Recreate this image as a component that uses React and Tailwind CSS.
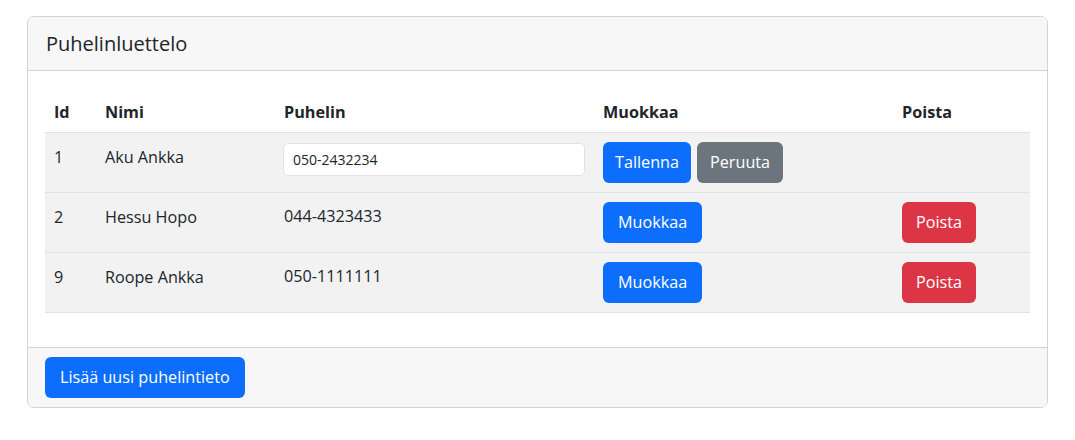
import React, { useState } from "react";

const rows = [
  { id: 1, name: "Aku Ankka", phone: "050-2432234", editing: true },
  { id: 2, name: "Hessu Hopo", phone: "044-4323433" },
  { id: 9, name: "Roope Ankka", phone: "050-1111111" },
];

const btn =
  "h-[41px] rounded-[6px] text-white text-[16.2px] leading-[26px] whitespace-nowrap cursor-pointer";

export default function App() {
  const [phone, setPhone] = useState("050-2432234");

  return (
    <div className="min-h-[440px] bg-white pt-4 px-[27px] font-['Open_Sans',sans-serif] text-[#212529]">
      <div className="w-[1021px] border border-[#d3d3d3] rounded-[7px] overflow-hidden">
        {/* Header */}
        <div className="h-[54px] bg-[#f7f7f7] border-b border-[#d3d3d3] px-[18px] flex items-center">
          <h5 className="text-[20px] font-normal">Puhelinluettelo</h5>
        </div>

        {/* Body */}
        <div className="px-[17px] pt-[17px] pb-[34px]">
          <table className="w-full table-fixed border-collapse text-[16.2px] leading-[26px]">
            <colgroup>
              <col className="w-[51px]" />
              <col className="w-[179px]" />
              <col className="w-[319px]" />
              <col className="w-[299px]" />
              <col />
            </colgroup>
            <thead>
              <tr className="h-[44px] border-b border-[#dee2e6] text-left align-top">
                <th className="px-[9px] pt-[11px] font-bold">Id</th>
                <th className="px-[9px] pt-[11px] font-bold">Nimi</th>
                <th className="px-[9px] pt-[11px] font-bold">Puhelin</th>
                <th className="px-[9px] pt-[11px] font-bold">Muokkaa</th>
                <th className="px-[9px] pt-[11px] font-bold">Poista</th>
              </tr>
            </thead>
            <tbody>
              {rows.map((r) => (
                <tr
                  key={r.id}
                  className="h-[60px] bg-[#f2f2f2] border-b border-[#dee2e6] align-top"
                >
                  <td className="px-[9px] pt-[11px]">{r.id}</td>
                  <td className="px-[9px] pt-[11px]">{r.name}</td>
                  <td className="px-[8px] pt-[10px]">
                    {r.editing ? (
                      <input
                        className="w-[302px] h-[33px] bg-white border border-[#dee2e6] rounded-[5px] px-[9px] text-[14px] outline-none"
                        value={phone}
                        onChange={(e) => setPhone(e.target.value)}
                      />
                    ) : (
                      <span className="pl-px">{r.phone}</span>
                    )}
                  </td>
                  <td className="px-[9px] pt-[9px]">
                    {r.editing ? (
                      <div className="flex gap-[6px]">
                        <button type="button" className={`${btn} px-[12px] bg-[#0d6efd]`}>
                          Tallenna
                        </button>
                        <button type="button" className={`${btn} px-[13px] bg-[#6c757d]`}>
                          Peruuta
                        </button>
                      </div>
                    ) : (
                      <button type="button" className={`${btn} px-[15px] bg-[#0d6efd]`}>
                        Muokkaa
                      </button>
                    )}
                  </td>
                  <td className="px-[9px] pt-[9px]">
                    {!r.editing && (
                      <button type="button" className={`${btn} px-[14px] bg-[#dc3545]`}>
                        Poista
                      </button>
                    )}
                  </td>
                </tr>
              ))}
            </tbody>
          </table>
        </div>

        {/* Footer */}
        <div className="bg-[#f7f7f7] border-t border-[#d3d3d3] px-[17px] py-[9px]">
          <button type="button" className={`${btn} px-[15px] bg-[#0d6efd]`}>
            Lisää uusi puhelintieto
          </button>
        </div>
      </div>
    </div>
  );
}
